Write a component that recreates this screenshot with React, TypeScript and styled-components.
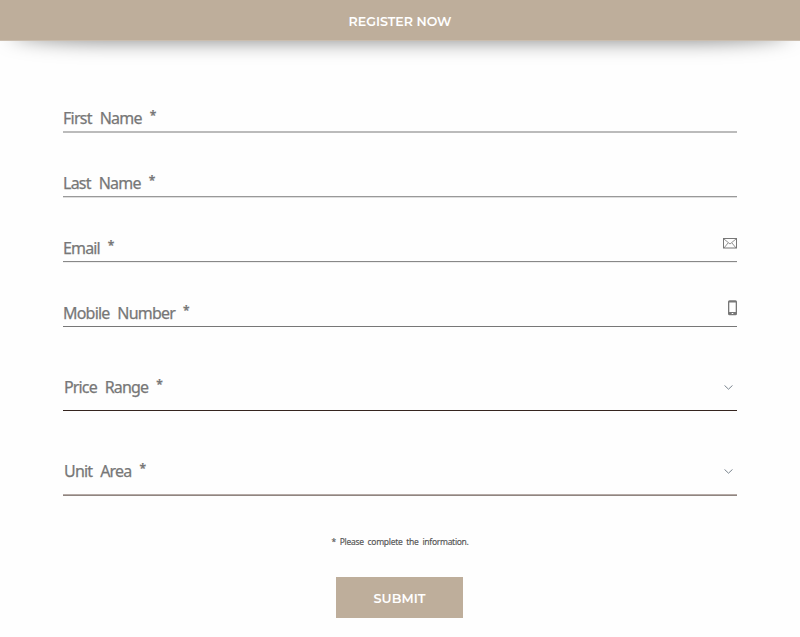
import React from "react";
import styled, { createGlobalStyle } from "styled-components";

const GlobalStyle = createGlobalStyle`
  * { box-sizing: border-box; }
  body { margin: 0; background: #fefefe; }
`;

const Page = styled.main`
  height: 637px;
  overflow: hidden;
  background: #fefefe;
`;

const Header = styled.header`
  position: relative;
  z-index: 0;
  height: 41px;

  &::before {
    content: "";
    position: absolute;
    z-index: -1;
    top: 50%;
    bottom: 0;
    left: 10px;
    right: 10px;
    border-radius: 100px / 10px;
    box-shadow: 0 0 20px rgba(0, 0, 0, 0.5);
  }
`;

const HeaderBar = styled.div`
  display: flex;
  align-items: center;
  justify-content: center;
  height: 41px;
  padding-top: 3px;
  background: #beae9b;
  border-bottom: 1px solid #cabdae;
`;

const Title = styled.h1`
  margin: 0;
  color: #fff;
  font: 600 12.6px/16px Montserrat, Inter, sans-serif;
`;

const Form = styled.form`
  display: flex;
  flex-direction: column;
  width: 674px;
  margin: 0 auto;
  padding-top: 27px;
`;

const Field = styled.div<{ $height: number; $upper: string; $lower: string }>`
  display: flex;
  align-items: flex-end;
  justify-content: space-between;
  height: ${(p) => p.$height}px;
  background:
    linear-gradient(${(p) => p.$upper}, ${(p) => p.$upper}) 0 calc(100% - 1px) / 100% 1px no-repeat,
    linear-gradient(${(p) => p.$lower}, ${(p) => p.$lower}) 0 100% / 100% 1px no-repeat;
`;

const Label = styled.label<{ $select?: boolean; $tracking: number }>`
  display: flex;
  gap: 8px;
  color: #777;
  font: 400 16px/22px "Noto Sans", sans-serif;
  letter-spacing: ${(p) => p.$tracking}px;
  word-spacing: 4.5px;
  white-space: nowrap;
  -webkit-text-stroke: 0.25px #777;
  margin: 0 0 ${(p) => (p.$select ? 14 : 4)}px ${(p) => (p.$select ? 1 : 0)}px;
`;

const Required = styled.span`
  font-size: 12px;
  font-weight: 600;
  line-height: 17px;
  letter-spacing: 0;
`;

const Icon = styled.svg<{ $bottom: number; $right?: number }>`
  display: block;
  flex: none;
  margin: 0 ${(p) => p.$right ?? 0}px ${(p) => p.$bottom}px 0;
`;

const Note = styled.p`
  margin: 40px 0 0;
  text-align: center;
  color: #555;
  font: 400 8.5px/12px "Noto Sans", sans-serif;
  letter-spacing: -0.3px;
  word-spacing: 2px;
  -webkit-text-stroke: 0.15px #555;
`;

const Submit = styled.button`
  align-self: center;
  width: 127px;
  height: 41px;
  margin: 29px 1px 0 0;
  padding: 2px 0 0;
  border: 0;
  background: #beae9b;
  color: #fff;
  font: 600 12.8px/16px Montserrat, Inter, sans-serif;
`;

const Envelope = () => (
  <Icon $bottom={14} width="14" height="11" viewBox="0 0 14 11" fill="none" stroke="#777">
    <rect x=".5" y=".5" width="13" height="9.5" />
    <path d="M1 1l6 5 6-5M1 10l4-5M13 10L9 5" strokeWidth=".8" />
  </Icon>
);

const Phone = () => (
  <Icon $bottom={12} width="9" height="16" viewBox="0 0 9 16">
    <path
      d="M1.5 0.3h6A1.5 1.5 0 0 1 9 1.8v12A1.5 1.5 0 0 1 7.5 15.3h-6A1.5 1.5 0 0 1 0 13.8v-12A1.5 1.5 0 0 1 1.5 0.3zM1.3 2.5v9.6h6.4V2.5zM3.7 13.1v1h1.6v-1z"
      fill="#777"
      fillRule="evenodd"
    />
  </Icon>
);

const Chevron = () => (
  <Icon $bottom={22} $right={4} width="9" height="5" viewBox="0 0 9 5" fill="none" stroke="#78838d">
    <path d="M.5 .4l4 3.8 4-3.8" />
  </Icon>
);

interface FieldData {
  label: string;
  height: number;
  upper: string;
  lower: string;
  tracking: number;
  select?: boolean;
  icon?: React.ReactNode;
}

const fields: FieldData[] = [
  { label: "First Name", height: 65, upper: "#bbb", lower: "#bbb", tracking: -0.75 },
  { label: "Last Name", height: 65, upper: "#999", lower: "#ddd", tracking: -0.75 },
  { label: "Email", height: 65, upper: "#888", lower: "#eee", tracking: -0.85, icon: <Envelope /> },
  { label: "Mobile Number", height: 65, upper: "#777", lower: "#fefefe", tracking: -0.8, icon: <Phone /> },
  { label: "Price Range", height: 84, upper: "#35251f", lower: "#fefefe", tracking: -0.85, select: true, icon: <Chevron /> },
  { label: "Unit Area", height: 84, upper: "#b5aaa6", lower: "#8f8580", tracking: -0.8, select: true, icon: <Chevron /> },
];

export default function App() {
  return (
    <>
      <GlobalStyle />
      <Page>
        <Header>
          <HeaderBar>
            <Title>REGISTER NOW</Title>
          </HeaderBar>
        </Header>
        <Form>
          {fields.map((f) => (
            <Field key={f.label} $height={f.height} $upper={f.upper} $lower={f.lower}>
              <Label $select={f.select} $tracking={f.tracking}>
                {f.label}
                <Required>*</Required>
              </Label>
              {f.icon}
            </Field>
          ))}
          <Note>* Please complete the information.</Note>
          <Submit type="button">SUBMIT</Submit>
        </Form>
      </Page>
    </>
  );
}
